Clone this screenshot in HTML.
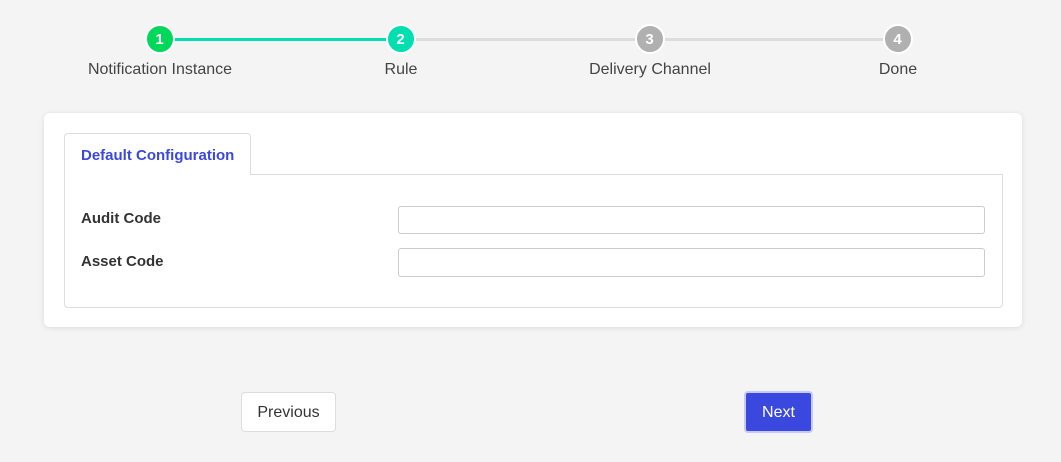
<!DOCTYPE html>
<html><head><style>
body{margin:0;width:1061px;height:462px;background:#f4f4f4;font-family:"Liberation Sans",sans-serif;position:relative;overflow:hidden}
.ln{position:absolute;top:38px;height:3px}
.c{position:absolute;top:24px;width:26px;height:26px;border:2.5px solid #fff;border-radius:50%;color:#fff;font-weight:bold;font-size:15px;text-align:center;line-height:28px;margin-left:-15.5px}
.lb{position:absolute;top:61px;font-size:16px;color:#444;transform:translateX(-50%);white-space:nowrap}
.card{position:absolute;left:44px;top:113px;width:978px;height:214px;background:#fff;border-radius:6px;box-shadow:0 1px 6px rgba(0,0,0,.1)}
.panel{position:absolute;left:64px;top:174px;width:937px;height:132px;border:1px solid #ddd;border-radius:0 0 4px 4px}
.tab{position:absolute;left:64px;top:133px;width:187px;height:42px;border:1px solid #ddd;border-bottom:none;border-radius:4px 4px 0 0;background:#fff;color:#3b48e0;font-weight:bold;font-size:15px;line-height:43px;box-sizing:border-box;padding-left:16px}
.fl{position:absolute;left:81px;font-weight:bold;font-size:15px;color:#333}
.in{position:absolute;left:398px;width:587px;height:28px;border:1px solid #ccc;border-radius:3px;box-sizing:border-box;background:#fff}
.btn{position:absolute;border-radius:4px;font-size:16px;text-align:center;box-sizing:border-box}
</style></head><body>
<div class="ln" style="left:160px;width:241px;background:#00dfb0"></div>
<div class="ln" style="left:401px;width:497px;background:#ddd"></div>
<div class="c" style="left:160px;background:#00d85c">1</div>
<div class="c" style="left:401px;background:#00dfb0">2</div>
<div class="c" style="left:650px;background:#b0b0b0">3</div>
<div class="c" style="left:898px;background:#b0b0b0">4</div>
<div class="lb" style="left:160px">Notification Instance</div>
<div class="lb" style="left:401px">Rule</div>
<div class="lb" style="left:650px">Delivery Channel</div>
<div class="lb" style="left:898px">Done</div>
<div class="card"></div>
<div class="panel"></div>
<div class="tab">Default Configuration</div>
<div class="fl" style="top:210px">Audit Code</div>
<div class="fl" style="top:253px">Asset Code</div>
<div class="in" style="top:206px"></div>
<div class="in" style="top:248px;height:29px"></div>
<div class="btn" style="left:241px;top:392px;width:95px;height:40px;background:#fff;border:1px solid #ddd;color:#333;line-height:39px">Previous</div>
<div class="btn" style="left:744px;top:391px;width:69px;height:42px;background:#3b48e0;border:2px solid #c5c9f3;color:#fff;line-height:39px">Next</div>
</body></html>
